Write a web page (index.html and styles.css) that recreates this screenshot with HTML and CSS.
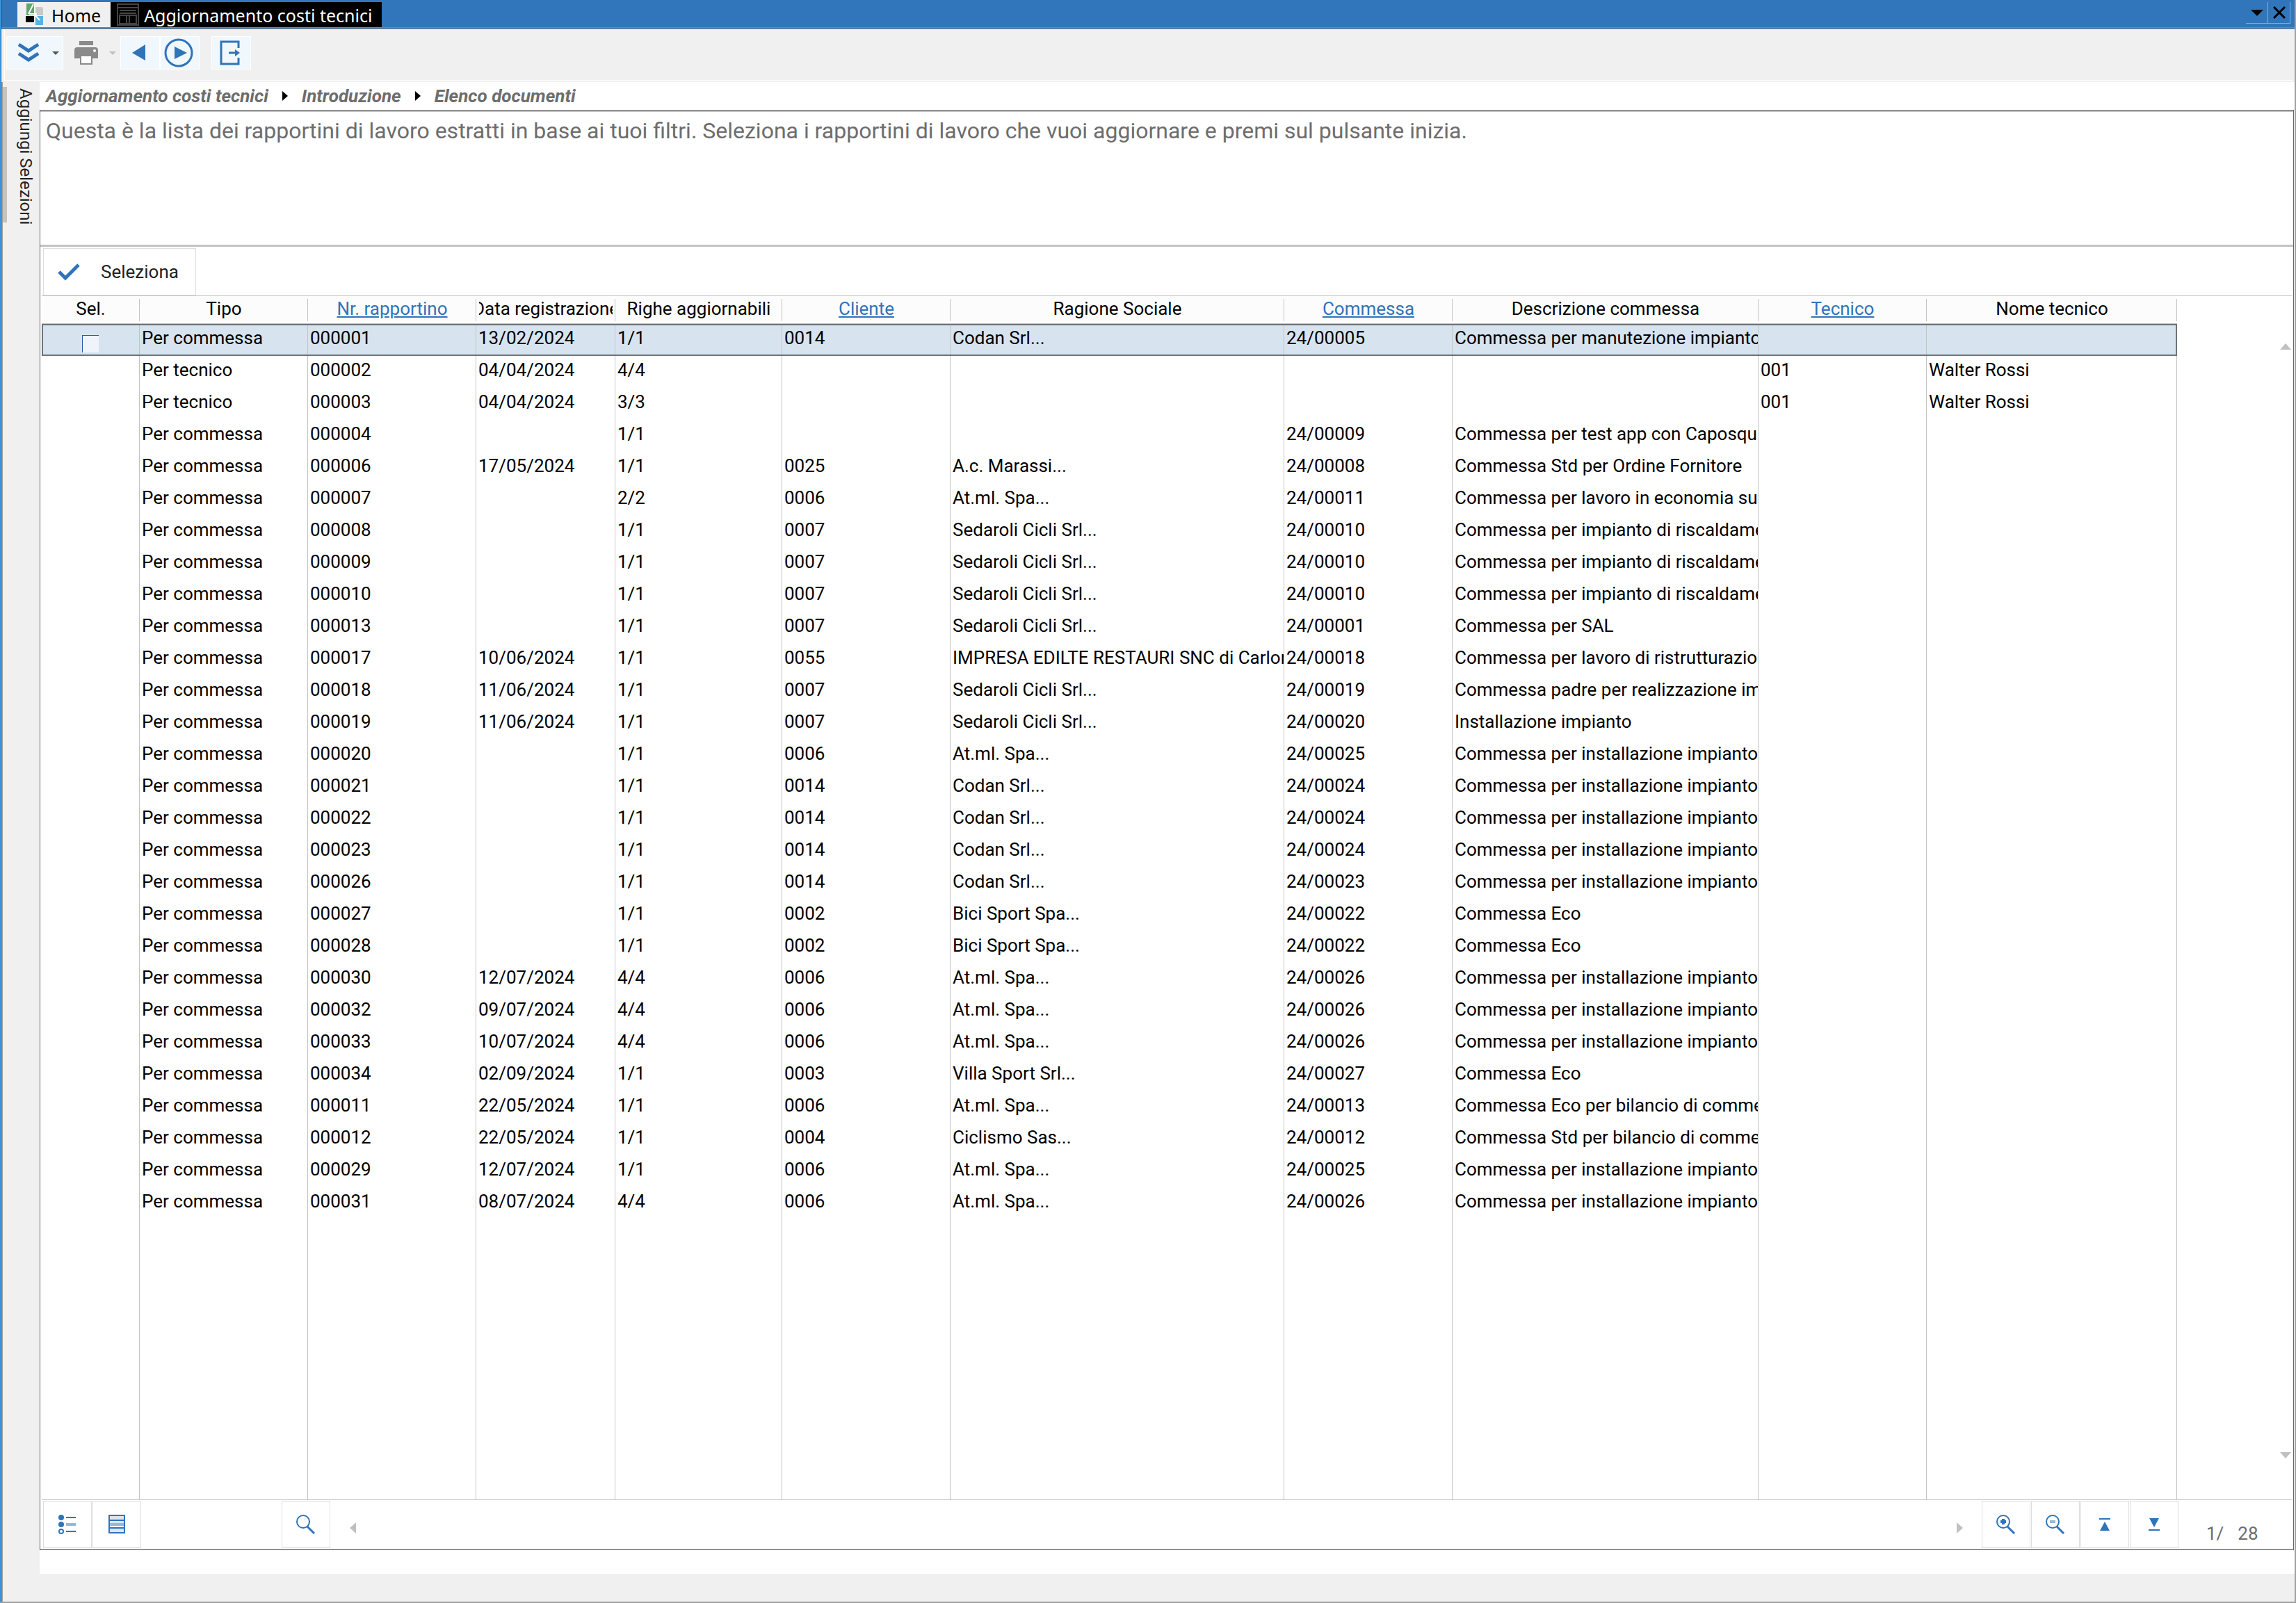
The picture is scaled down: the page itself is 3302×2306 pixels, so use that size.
FILE: index.html
```html
<!DOCTYPE html>
<html lang="it">
<head>
  <meta charset="UTF-8" />
  <meta name="viewport" content="width=device-width, initial-scale=1.0"/>
  <title>Aggiornamento costi tecnici</title>
  <link rel="stylesheet" href="styles.css">
</head>
<body>

<div class="window">

  <header class="tabbar">
    <nav class="tabs">
      <a class="tab" href="#">
        <svg class="tab-logo" viewBox="0 0 26 32">
          <path d="M1 0h11v17H1z" fill="#5aa86f"/>
          <path d="M14 5h8q3 0 3 3v9H14z" fill="#c9c9c9"/>
          <path d="M0 18h12v9H0z" fill="#000"/>
          <path d="M14 18h11v13H14z" fill="#55b4e2"/>
          <path d="M4 15L11 1M5 15h11M13 4v12l7 8" stroke="#fff" stroke-width="2" fill="none"/>
        </svg>
        Home
      </a>
      <a class="tab tab-active" href="#">
        <svg class="tab-form" viewBox="0 0 32 32" fill="none" stroke="#444" stroke-width="2">
          <path d="M1 1h30v30H1zM1 6h30M4 10h24M4 14h24M4 16v13h24V16M14 17v12M18 17v12M4 17h24"/>
        </svg>
        Aggiornamento costi tecnici
      </a>
    </nav>
    <div class="window-buttons">
      <button type="button" aria-label="Elenco finestre"><svg viewBox="0 0 18 9" width="18" height="9"><path d="M0 0h18l-9 9z"/></svg></button>
      <button type="button" aria-label="Chiudi"><svg viewBox="0 0 18 18" width="18" height="18"><path d="M1 1l16 16M17 1L1 17" stroke="#000" stroke-width="3"/></svg></button>
    </div>
  </header>

  <div class="toolbar">
    <button type="button" class="tool tool-menu" aria-label="Azioni">
      <svg width="32" height="30" viewBox="0 0 32 30" fill="none" stroke="#2f74b9" stroke-width="5"><path d="M2 3l14 9 14-9M2 16l14 9 14-9"/></svg>
      <svg width="10" height="5" viewBox="0 0 10 5"><path d="M0 0h10L5 5z" fill="#555"/></svg>
    </button>
    <button type="button" class="tool tool-print" aria-label="Stampa" disabled>
      <svg width="36" height="36" viewBox="0 0 36 36" fill="#8a8a8a"><path d="M8 1h20v6H8z"/><path d="M5 10h26q4 0 4 4v12h-8v-5H9v5H1V14q0-4 4-4z"/><path d="M10 22h16v12H10z" fill="#fff" stroke="#8a8a8a" stroke-width="2"/><circle cx="30" cy="15" r="2" fill="#fff"/></svg>
      <svg width="10" height="5" viewBox="0 0 10 5"><path d="M0 0h10L5 5z" fill="#c0c0c0"/></svg>
    </button>
    <button type="button" class="tool" aria-label="Indietro">
      <svg width="20" height="26" viewBox="0 0 20 26"><path d="M19 1v23L0 13z" fill="#2f74b9"/></svg>
    </button>
    <button type="button" class="tool" aria-label="Inizia">
      <svg width="42" height="42" viewBox="0 0 42 42"><circle cx="21" cy="21" r="19" fill="none" stroke="#2f74b9" stroke-width="3"/><path d="M15 12v18l18-9z" fill="#2f74b9"/></svg>
    </button>
    <button type="button" class="tool tool-exit" aria-label="Esci">
      <svg width="30" height="36" viewBox="0 0 30 36" fill="none" stroke="#2f74b9" stroke-width="3"><path d="M27 11V2H2v32h25v-9"/><path d="M13 18h12"/><path d="M22 13l7 5-7 5z" fill="#2f74b9" stroke="none"/></svg>
    </button>
  </div>

  <div class="workspace">
    <aside class="sidebar">
      <button type="button" class="side-tab">Aggiungi Selezioni</button>
    </aside>

    <main class="content">
      <nav class="breadcrumb">
        <span>Aggiornamento costi tecnici</span>
        <svg width="8" height="14" viewBox="0 0 8 14"><path d="M0 0l8 7-8 7z"/></svg>
        <span>Introduzione</span>
        <svg width="8" height="14" viewBox="0 0 8 14"><path d="M0 0l8 7-8 7z"/></svg>
        <span>Elenco documenti</span>
      </nav>

      <section class="panel">
        <p class="intro">Questa è la lista dei rapportini di lavoro estratti in base ai tuoi filtri. Seleziona i rapportini di lavoro che vuoi aggiornare e premi sul pulsante inizia.</p>

        <div class="actions">
          <button type="button" class="select-button">
            <svg width="32" height="26" viewBox="0 0 32 26" fill="none" stroke="#2f74b9" stroke-width="5"><path d="M2 13l9 9L30 3"/></svg>
            Seleziona
          </button>
        </div>

        <div class="grid">
          <table class="grid-table">
            <colgroup>
              <col class="w-sel"><col class="w-code"><col class="w-code"><col class="w-date"><col class="w-lines"><col class="w-code"><col class="w-name"><col class="w-code"><col class="w-desc"><col class="w-code"><col class="w-tech">
            </colgroup>
            <thead>
              <tr>
                <th><span>Sel.</span></th>
                <th><span>Tipo</span></th>
                <th><span><a href="#">Nr. rapportino</a></span></th>
                <th><span>Data registrazione</span></th>
                <th><span>Righe aggiornabili</span></th>
                <th><span><a href="#">Cliente</a></span></th>
                <th><span>Ragione Sociale</span></th>
                <th><span><a href="#">Commessa</a></span></th>
                <th><span>Descrizione commessa</span></th>
                <th><span><a href="#">Tecnico</a></span></th>
                <th><span>Nome tecnico</span></th>
              </tr>
            </thead>
            <tbody>
              <tr class="current"><td class="check"><input type="checkbox" aria-label="Seleziona rapportino 000001"></td><td>Per commessa</td><td>000001</td><td>13/02/2024</td><td>1/1</td><td>0014</td><td>Codan Srl...</td><td>24/00005</td><td>Commessa per manutezione impianto</td><td></td><td></td></tr>
              <tr><td></td><td>Per tecnico</td><td>000002</td><td>04/04/2024</td><td>4/4</td><td></td><td></td><td></td><td></td><td>001</td><td>Walter Rossi</td></tr>
              <tr><td></td><td>Per tecnico</td><td>000003</td><td>04/04/2024</td><td>3/3</td><td></td><td></td><td></td><td></td><td>001</td><td>Walter Rossi</td></tr>
              <tr><td></td><td>Per commessa</td><td>000004</td><td></td><td>1/1</td><td></td><td></td><td>24/00009</td><td>Commessa per test app con Caposqu</td><td></td><td></td></tr>
              <tr><td></td><td>Per commessa</td><td>000006</td><td>17/05/2024</td><td>1/1</td><td>0025</td><td>A.c. Marassi...</td><td>24/00008</td><td>Commessa Std per Ordine Fornitore</td><td></td><td></td></tr>
              <tr><td></td><td>Per commessa</td><td>000007</td><td></td><td>2/2</td><td>0006</td><td>At.ml. Spa...</td><td>24/00011</td><td>Commessa per lavoro in economia su</td><td></td><td></td></tr>
              <tr><td></td><td>Per commessa</td><td>000008</td><td></td><td>1/1</td><td>0007</td><td>Sedaroli Cicli Srl...</td><td>24/00010</td><td>Commessa per impianto di riscaldame</td><td></td><td></td></tr>
              <tr><td></td><td>Per commessa</td><td>000009</td><td></td><td>1/1</td><td>0007</td><td>Sedaroli Cicli Srl...</td><td>24/00010</td><td>Commessa per impianto di riscaldame</td><td></td><td></td></tr>
              <tr><td></td><td>Per commessa</td><td>000010</td><td></td><td>1/1</td><td>0007</td><td>Sedaroli Cicli Srl...</td><td>24/00010</td><td>Commessa per impianto di riscaldame</td><td></td><td></td></tr>
              <tr><td></td><td>Per commessa</td><td>000013</td><td></td><td>1/1</td><td>0007</td><td>Sedaroli Cicli Srl...</td><td>24/00001</td><td>Commessa per SAL</td><td></td><td></td></tr>
              <tr><td></td><td>Per commessa</td><td>000017</td><td>10/06/2024</td><td>1/1</td><td>0055</td><td>IMPRESA EDILTE RESTAURI SNC di Carlon</td><td>24/00018</td><td>Commessa per lavoro di ristrutturazio</td><td></td><td></td></tr>
              <tr><td></td><td>Per commessa</td><td>000018</td><td>11/06/2024</td><td>1/1</td><td>0007</td><td>Sedaroli Cicli Srl...</td><td>24/00019</td><td>Commessa padre per realizzazione im</td><td></td><td></td></tr>
              <tr><td></td><td>Per commessa</td><td>000019</td><td>11/06/2024</td><td>1/1</td><td>0007</td><td>Sedaroli Cicli Srl...</td><td>24/00020</td><td>Installazione impianto</td><td></td><td></td></tr>
              <tr><td></td><td>Per commessa</td><td>000020</td><td></td><td>1/1</td><td>0006</td><td>At.ml. Spa...</td><td>24/00025</td><td>Commessa per installazione impianto</td><td></td><td></td></tr>
              <tr><td></td><td>Per commessa</td><td>000021</td><td></td><td>1/1</td><td>0014</td><td>Codan Srl...</td><td>24/00024</td><td>Commessa per installazione impianto</td><td></td><td></td></tr>
              <tr><td></td><td>Per commessa</td><td>000022</td><td></td><td>1/1</td><td>0014</td><td>Codan Srl...</td><td>24/00024</td><td>Commessa per installazione impianto</td><td></td><td></td></tr>
              <tr><td></td><td>Per commessa</td><td>000023</td><td></td><td>1/1</td><td>0014</td><td>Codan Srl...</td><td>24/00024</td><td>Commessa per installazione impianto</td><td></td><td></td></tr>
              <tr><td></td><td>Per commessa</td><td>000026</td><td></td><td>1/1</td><td>0014</td><td>Codan Srl...</td><td>24/00023</td><td>Commessa per installazione impianto</td><td></td><td></td></tr>
              <tr><td></td><td>Per commessa</td><td>000027</td><td></td><td>1/1</td><td>0002</td><td>Bici Sport Spa...</td><td>24/00022</td><td>Commessa Eco</td><td></td><td></td></tr>
              <tr><td></td><td>Per commessa</td><td>000028</td><td></td><td>1/1</td><td>0002</td><td>Bici Sport Spa...</td><td>24/00022</td><td>Commessa Eco</td><td></td><td></td></tr>
              <tr><td></td><td>Per commessa</td><td>000030</td><td>12/07/2024</td><td>4/4</td><td>0006</td><td>At.ml. Spa...</td><td>24/00026</td><td>Commessa per installazione impianto</td><td></td><td></td></tr>
              <tr><td></td><td>Per commessa</td><td>000032</td><td>09/07/2024</td><td>4/4</td><td>0006</td><td>At.ml. Spa...</td><td>24/00026</td><td>Commessa per installazione impianto</td><td></td><td></td></tr>
              <tr><td></td><td>Per commessa</td><td>000033</td><td>10/07/2024</td><td>4/4</td><td>0006</td><td>At.ml. Spa...</td><td>24/00026</td><td>Commessa per installazione impianto</td><td></td><td></td></tr>
              <tr><td></td><td>Per commessa</td><td>000034</td><td>02/09/2024</td><td>1/1</td><td>0003</td><td>Villa Sport Srl...</td><td>24/00027</td><td>Commessa Eco</td><td></td><td></td></tr>
              <tr><td></td><td>Per commessa</td><td>000011</td><td>22/05/2024</td><td>1/1</td><td>0006</td><td>At.ml. Spa...</td><td>24/00013</td><td>Commessa Eco per bilancio di comme</td><td></td><td></td></tr>
              <tr><td></td><td>Per commessa</td><td>000012</td><td>22/05/2024</td><td>1/1</td><td>0004</td><td>Ciclismo Sas...</td><td>24/00012</td><td>Commessa Std per bilancio di comme</td><td></td><td></td></tr>
              <tr><td></td><td>Per commessa</td><td>000029</td><td>12/07/2024</td><td>1/1</td><td>0006</td><td>At.ml. Spa...</td><td>24/00025</td><td>Commessa per installazione impianto</td><td></td><td></td></tr>
              <tr><td></td><td>Per commessa</td><td>000031</td><td>08/07/2024</td><td>4/4</td><td>0006</td><td>At.ml. Spa...</td><td>24/00026</td><td>Commessa per installazione impianto</td><td></td><td></td></tr>
              <tr class="filler"><td></td><td></td><td></td><td></td><td></td><td></td><td></td><td></td><td></td><td></td><td></td></tr>
            </tbody>
          </table>
          <div class="vscroll">
            <svg width="16" height="9" viewBox="0 0 16 9"><path d="M8 0l8 9H0z"/></svg>
            <svg width="16" height="9" viewBox="0 0 16 9"><path d="M0 0h16L8 9z"/></svg>
          </div>
        </div>

        <footer class="gridbar">
          <button type="button" class="bar-button" aria-label="Vista elenco">
            <svg width="26" height="30" viewBox="0 0 26 30" fill="#2f74b9"><circle cx="4" cy="5" r="4"/><circle cx="4" cy="15" r="4"/><circle cx="4" cy="25" r="3" fill="none" stroke="#2f74b9" stroke-width="2"/><path d="M11 4h14v2H11zM11 24h14v2H11z"/><path d="M11 13h14v4H11z" fill="#94b9db"/></svg>
          </button>
          <button type="button" class="bar-button" aria-label="Vista scheda">
            <svg width="26" height="28" viewBox="0 0 26 28"><path d="M2 2h22v24H2z" fill="#dbe5ef"/><path d="M2 12h22v4H2z" fill="#94b9db"/><path d="M4 16h19v3H4z" fill="#fff"/><path d="M2 1h22v25H2zM2 8h22M2 19h22" fill="none" stroke="#2f74b9" stroke-width="2"/></svg>
          </button>
          <button type="button" class="bar-button bar-find" aria-label="Cerca">
            <svg width="28" height="30" viewBox="0 0 28 30" fill="none" stroke="#2f74b9"><circle cx="10" cy="11" r="9" stroke-width="2"/><path d="M16 18l10 10" stroke-width="3"/></svg>
          </button>
          <div class="hscroll">
            <svg width="9" height="16" viewBox="0 0 9 16"><path d="M9 0v16L0 8z"/></svg>
            <svg width="9" height="16" viewBox="0 0 9 16"><path d="M0 0l9 8-9 8z"/></svg>
          </div>
          <button type="button" class="bar-button" aria-label="Ingrandisci">
            <svg width="28" height="30" viewBox="0 0 28 30" fill="none" stroke="#2f74b9"><circle cx="10" cy="11" r="9" stroke-width="2"/><path d="M16 18l10 10" stroke-width="3"/><path d="M10 7v8M6 11h8" stroke-width="4"/></svg>
          </button>
          <button type="button" class="bar-button" aria-label="Riduci">
            <svg width="28" height="30" viewBox="0 0 28 30" fill="none" stroke="#2f74b9"><circle cx="10" cy="11" r="9" stroke-width="2"/><path d="M16 18l10 10" stroke-width="3"/><path d="M6 11h8" stroke="#94b9db" stroke-width="4"/></svg>
          </button>
          <button type="button" class="bar-button" aria-label="Primo">
            <svg width="16" height="18" viewBox="0 0 16 18" fill="#2f74b9"><path d="M0 0h16v2H0zM8 5l7 13H1z"/></svg>
          </button>
          <button type="button" class="bar-button" aria-label="Ultimo">
            <svg width="16" height="18" viewBox="0 0 16 18" fill="#2f74b9"><path d="M1 0h14L8 13zM0 16h16v2H0z"/></svg>
          </button>
          <div class="counter"><span>1/</span><span>28</span></div>
        </footer>
      </section>
    </main>
  </div>
</div>

</body>
</html>
```
FILE: styles.css
```css
* {
  box-sizing: border-box;
}

html, body {
  margin: 0;
  height: 100%;
  font-family: Roboto, "Liberation Sans", sans-serif;
  font-size: 26px;
  color: #000;
  background: #f0f0f0;
}

button {
  margin: 0;
  padding: 0;
  border: none;
  background: none;
  font: inherit;
  color: inherit;
}

svg {
  display: block;
  flex: none;
}

.window {
  display: flex;
  flex-direction: column;
  min-height: 100vh;
  padding-left: 1px;
  border-left: 1px solid #3ba5f5;
  border-right: 2px solid #a0a0a0;
  border-bottom: 2px solid #a0a0a0;
  box-shadow: inset 1px 0 #444;
}

/* tabs */
.tabbar {
  display: flex;
  justify-content: space-between;
  height: 42px;
  padding: 3px 6px 0 23px;
  background: #3176ba;
  border-bottom: 3px double #8a8080;
}

.tabs {
  display: flex;
}

.tab {
  display: flex;
  align-items: center;
  gap: 11px;
  padding: 2px 14px 0 12px;
  background: #f0f0f0;
  color: #000;
  font-family: "Noto Sans", sans-serif;
  font-size: 25px;
  line-height: 36px;
  text-decoration: none;
  white-space: nowrap;
}

.tab svg {
  align-self: flex-start;
}

.tab-active {
  gap: 7px;
  padding-left: 9px;
  background: #000;
  color: #fff;
}

.tab-logo {
  width: 26px;
  height: 32px;
}

.tab-form {
  width: 32px;
  height: 32px;
}

.window-buttons {
  display: flex;
}

.window-buttons button {
  display: flex;
  align-items: center;
  justify-content: center;
  width: 32px;
  height: 31px;
  border-right: 1px solid #82b4de;
  border-bottom: 1px solid #82b4de;
}

/* toolbar */
.toolbar {
  display: flex;
  align-items: flex-start;
  height: 74px;
  margin: 0 2px 2px 4px;
  padding: 10px 2px;
  border-bottom: 1px solid #fff;
  border-left: 1px solid #fff;
}

.tool {
  display: flex;
  align-items: center;
  justify-content: center;
  width: 57px;
  height: 48px;
  padding-right: 3px;
  background: #f0f7fd;
  border: 1px solid #fff;
}

.tool-menu {
  justify-content: space-between;
  width: 82px;
  padding: 0 5px 0 15px;
}

.tool-print {
  justify-content: space-between;
  width: 82px;
  padding: 0 5px 0 14px;
  background: none;
  border-color: transparent;
}

.tool-exit {
  margin-left: 17px;
}

/* body of the window */
.workspace {
  display: flex;
  flex: 1;
}

.sidebar {
  width: 55px;
  padding-top: 7px;
  border-left: 2px solid #a0a0a0;
}

.side-tab {
  height: 195px;
  padding: 2px 2px 0 8px;
  border-left: 6px solid #c3c3c3;
  color: #222;
  font-size: 24px;
  line-height: 37px;
  writing-mode: vertical-rl;
  white-space: nowrap;
}

.content {
  display: flex;
  flex: 1;
  flex-direction: column;
  min-width: 0;
  margin-bottom: 40px;
  padding-bottom: 34px;
  background: #fff;
}

.breadcrumb {
  display: flex;
  align-items: center;
  gap: 20px;
  height: 40px;
  padding-left: 9px;
  color: #6d6d6d;
  font-size: 26px;
  font-style: italic;
  font-weight: bold;
}

.breadcrumb svg {
  fill: #000;
}

.panel {
  display: flex;
  flex: 1;
  flex-direction: column;
  border: 1px solid #666;
  margin-right: 1px;
}

.intro {
  height: 196px;
  margin: 0;
  padding: 9px 8px;
  border-top: 2px solid #c3c3c3;
  border-bottom: 3px solid #c3c3c3;
  color: #6d6d6d;
  font-size: 32px;
  line-height: 36px;
}

.actions {
  height: 70px;
  padding: 2px 4px;
}

.select-button {
  display: flex;
  align-items: center;
  gap: 30px;
  height: 68px;
  padding: 0 24px 0 20px;
  border: 1px solid #dedede;
  color: #222;
}

/* data grid */
.grid {
  display: flex;
  flex: 1;
  justify-content: space-between;
  margin: 0 2px;
  border-top: 1px solid #c3c3c3;
  border-bottom: 1px solid #c3c3c3;
}

.grid-table {
  flex: none;
  width: 3071px;
  table-layout: fixed;
  border-collapse: separate;
  border-spacing: 0;
}

.w-sel { width: 141px; }
.w-code { width: 242px; }
.w-date { width: 200px; }
.w-lines { width: 240px; }
.w-name { width: 480px; }
.w-desc { width: 440px; }
.w-tech { width: 360px; }

.grid-table th {
  height: 40px;
  padding: 0 4px 3px;
  background: linear-gradient(#c3c3c3, #c3c3c3) right 4px / 1px 32px no-repeat #fcfcfc;
  border-bottom: 1px solid #c3c3c3;
  font-weight: normal;
  line-height: 36px;
}

.grid-table th span {
  display: flex;
  justify-content: center;
  overflow: hidden;
  white-space: nowrap;
}

.grid-table th a {
  color: #2f74b9;
}

.grid-table td {
  height: 46px;
  padding: 0 0 6px 3px;
  border-right: 1px solid #c3c3c3;
  line-height: 40px;
  white-space: nowrap;
  overflow: hidden;
}

.grid-table .filler td {
  height: auto;
}

.current {
  background: #d7e4ef;
  outline: 2px solid #6d7378;
  outline-offset: -2px;
}

.grid-table td.check {
  padding: 16px 0 5px;
}

.check input {
  display: block;
  width: 24px;
  height: 25px;
  margin: 0 auto;
  appearance: none;
  background: #eff3fc;
  border-top: 1px solid #2f55a0;
  border-left: 1px solid #2f55a0;
}

.vscroll {
  display: flex;
  flex-direction: column;
  justify-content: space-between;
  padding: 68px 1px 59px;
  fill: #c0c0c0;
}

/* bar under the grid */
.gridbar {
  display: flex;
  gap: 1px;
  height: 71px;
  padding: 1px 4px;
  border-bottom: 1px solid #c3c3c3;
}

.bar-button {
  display: flex;
  align-items: center;
  justify-content: center;
  width: 70px;
  height: 68px;
  border: 1px solid #dedede;
}

.bar-find {
  margin-left: 201px;
}

.hscroll {
  display: flex;
  flex: 1;
  align-items: center;
  justify-content: space-between;
  padding: 10px 26px 0 27px;
  fill: #c0c0c0;
}

.counter {
  display: flex;
  gap: 20px;
  width: 160px;
  padding: 30px 0 0 39px;
  color: #6d6d6d;
  line-height: 34px;
}
```
